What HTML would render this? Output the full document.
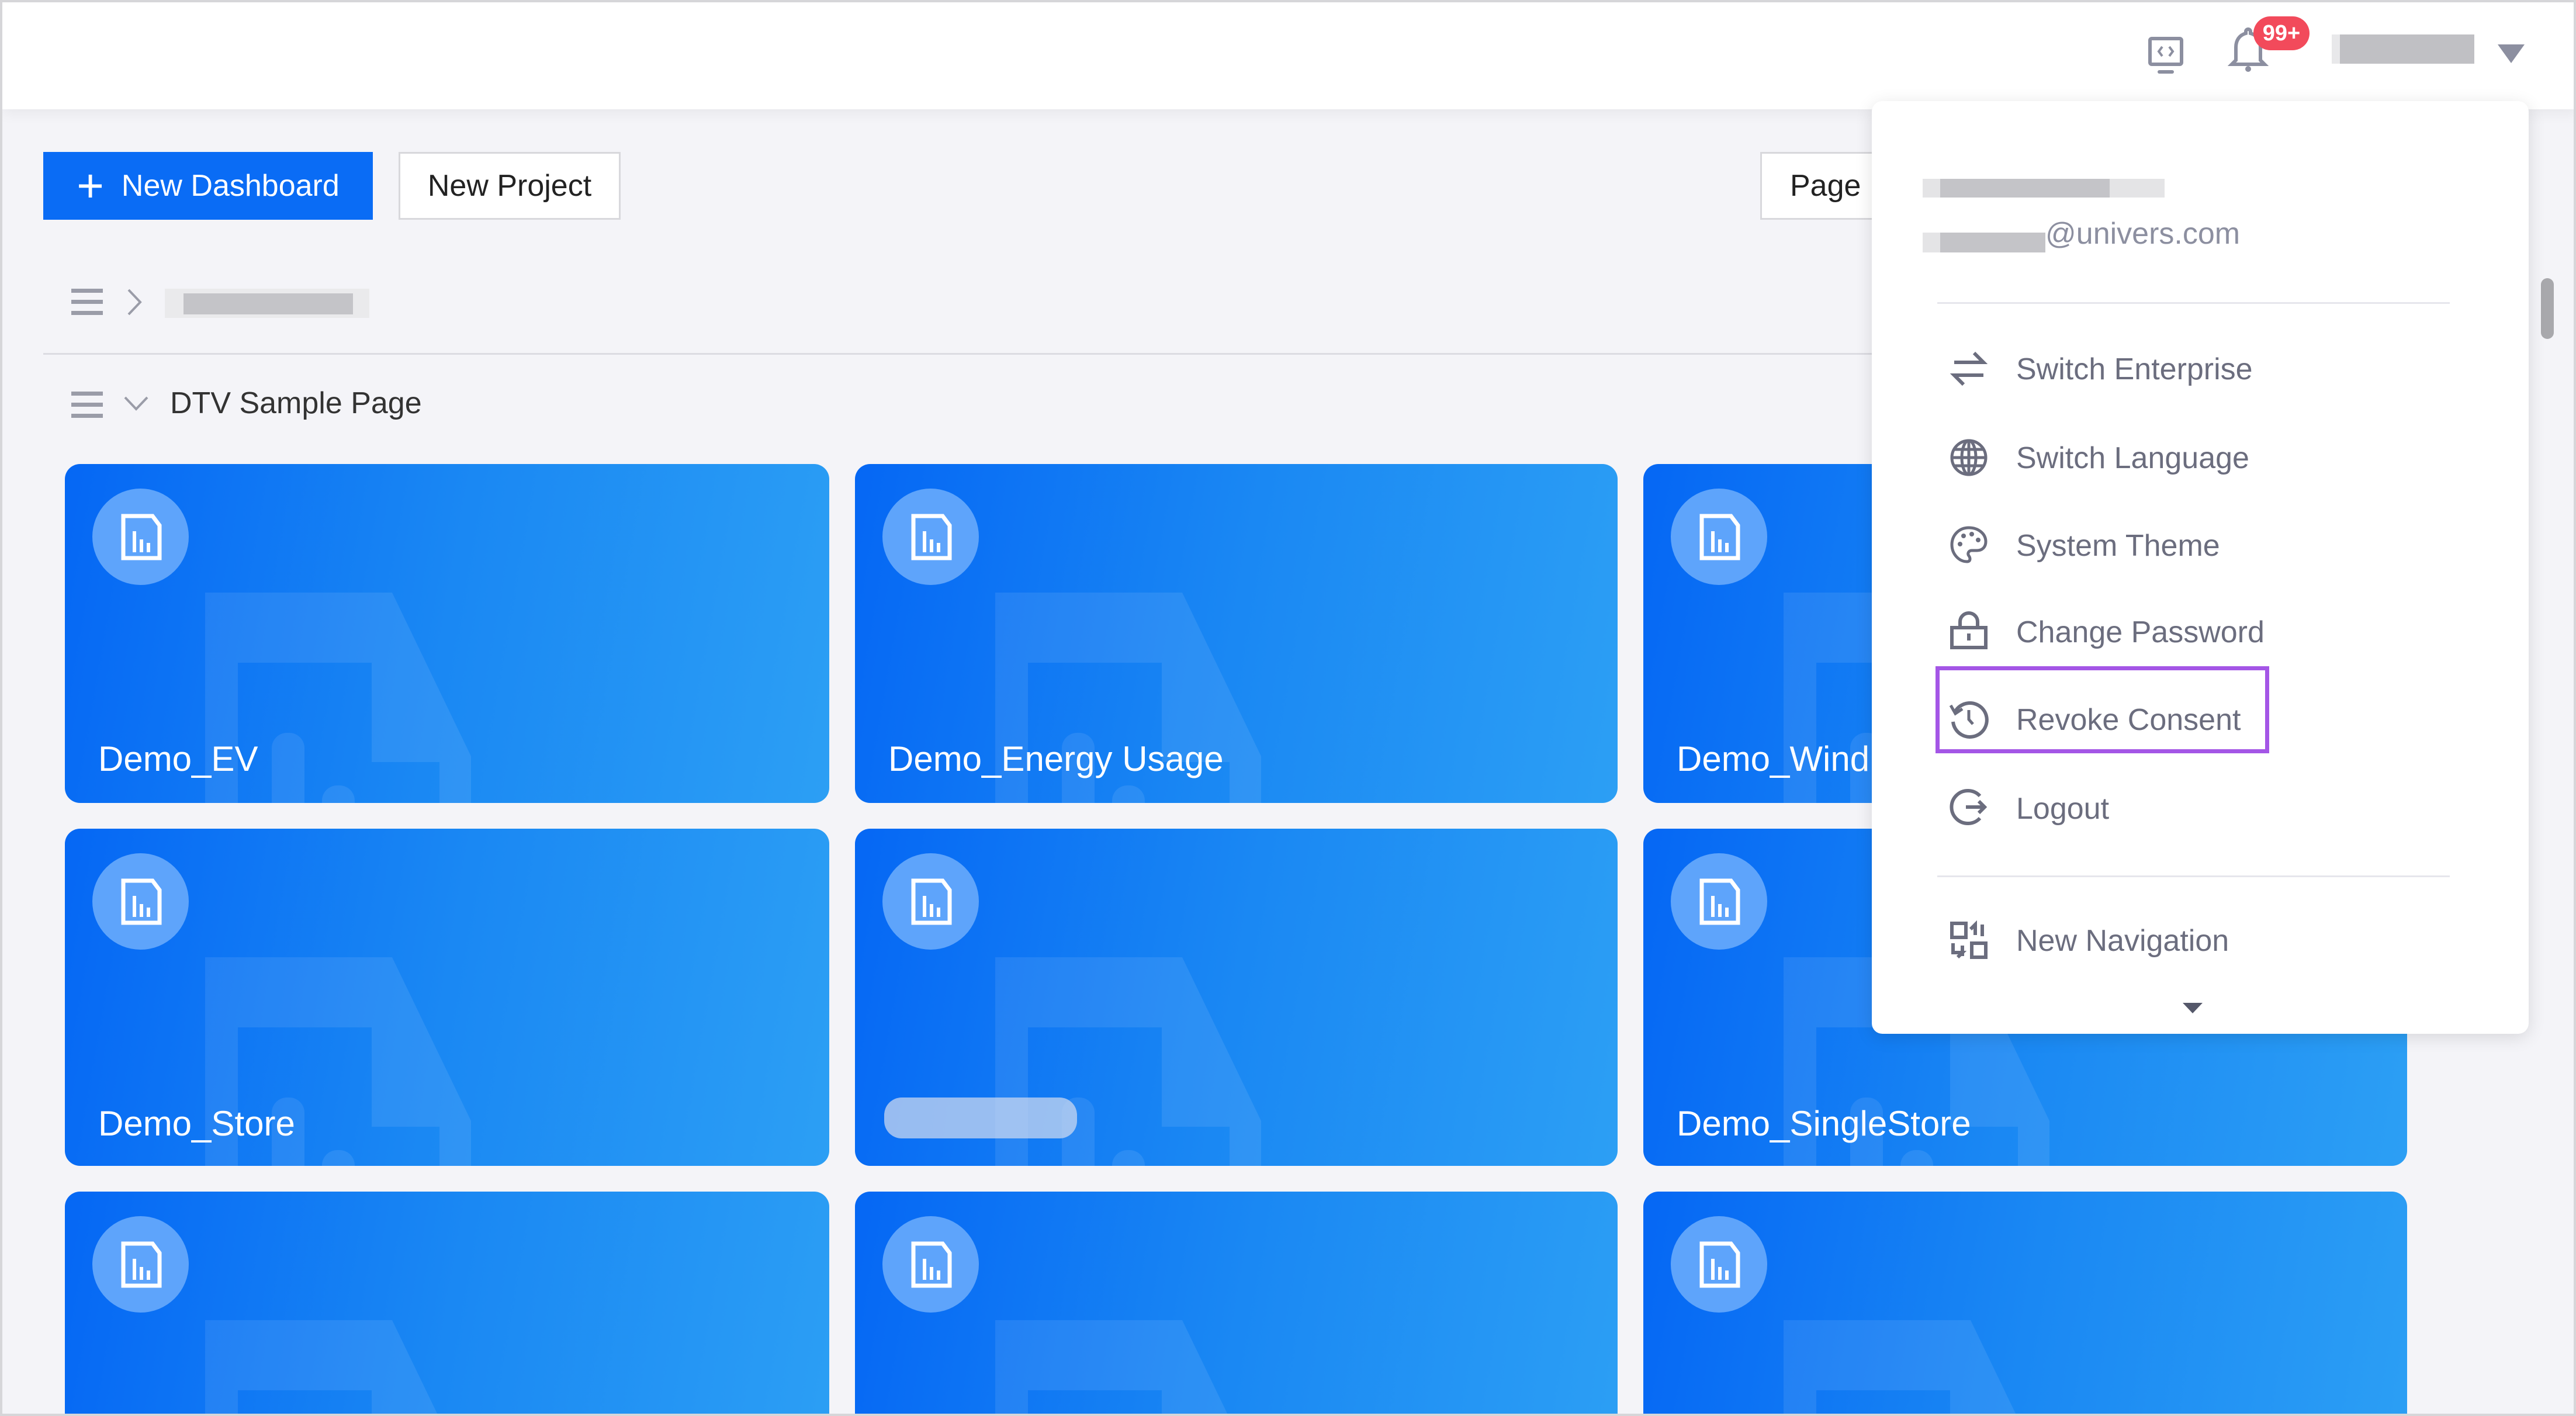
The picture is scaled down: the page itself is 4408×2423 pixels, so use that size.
<!DOCTYPE html>
<html><head><meta charset="utf-8"><style>
*{box-sizing:border-box;margin:0;padding:0}
html,body{width:4408px;height:2423px;overflow:hidden}
body{background:#f4f4f8;font-family:"Liberation Sans",sans-serif}
#root{position:relative;width:4408px;height:2423px;overflow:hidden;border:4px solid #d6d6d9;background:#f4f4f8}
.abs{position:absolute}
.hdr{left:0;top:0;width:4408px;height:183px;background:#fff;box-shadow:0 6px 24px rgba(0,0,0,.06)}
.btn{height:116px;display:flex;align-items:center;justify-content:center;font-size:52px}
.card{border-radius:26px;background:linear-gradient(100deg,#0567f4 0%,#1a88f3 50%,#2c9ff4 100%);overflow:hidden}
.card .circ{position:absolute;left:47px;top:42px;width:165px;height:165px;border-radius:50%;background:#5ea4fb}
.card .t{position:absolute;left:57px;top:470px;color:#fff;font-size:60px}
.card .bg{position:absolute;left:240px;top:220px}
.blur{background:#c4c4c8}
.mi{position:absolute;left:3446px;font-size:52px;color:#6b6d7e}
.ic{position:absolute;left:3330px;width:70px;height:70px}
</style></head><body><div id="root">
<div class="abs hdr"></div>
<svg class="abs" style="left:3670px;top:58px" width="64" height="72" viewBox="0 0 64 72"><rect x="5" y="4" width="54" height="44" rx="3" fill="none" stroke="#8c8fa0" stroke-width="6"/><path d="M26 18l-6 8 6 8M38 18l6 8-6 8" fill="none" stroke="#8c8fa0" stroke-width="4"/><rect x="18" y="58" width="28" height="6" rx="3" fill="#8c8fa0"/></svg>
<svg class="abs" style="left:3808px;top:40px" width="70" height="80" viewBox="0 0 70 80"><path d="M35 6a4 4 0 0 1 4 4v3c11 3 17 12 17 24v22l7 7H7l7-7V37c0-12 6-21 17-24v-3a4 4 0 0 1 4-4z" fill="none" stroke="#8c8fa0" stroke-width="6"/><circle cx="35" cy="74" r="5" fill="#8c8fa0"/></svg>
<div class="abs" style="left:3852px;top:24px;width:96px;height:58px;border-radius:29px;background:#f24a5b;color:#fff;font-size:38px;font-weight:bold;display:flex;align-items:center;justify-content:center">99+</div>
<div class="abs blur" style="left:4000px;top:55px;width:230px;height:50px;background:#c0c0c4;box-shadow:-14px 0 0 #e8e8ea"></div>
<svg class="abs" style="left:4270px;top:72px" width="46" height="34"><path d="M0 0h46L23 32z" fill="#8c8fa0"/></svg>
<div class="abs btn" style="left:70px;top:256px;width:564px;background:#0a6cf5;color:#fff"><span style="font-size:80px;margin-right:30px;font-weight:300;line-height:1">+</span>New Dashboard</div>
<div class="abs btn" style="left:678px;top:256px;width:380px;background:#fff;border:3px solid #d8d8dc;color:#222">New Project</div>
<div class="abs btn" style="left:3008px;top:256px;width:300px;background:#fff;border:3px solid #d8d8dc;color:#222;justify-content:flex-start;padding-left:48px">Page</div>
<div class="abs" style="left:4290px;top:256px;width:30px;height:116px;background:#fff;border:3px solid #d8d8dc;border-left:none"></div>
<svg class="abs" style="left:118px;top:490px" width="54" height="46"><rect y="0" width="54" height="7" fill="#9a9ca8"/><rect y="19" width="54" height="7" fill="#9a9ca8"/><rect y="38" width="54" height="7" fill="#9a9ca8"/></svg>
<svg class="abs" style="left:212px;top:488px" width="30" height="50"><path d="M4 4l20 21L4 46" fill="none" stroke="#9a9ca8" stroke-width="4"/></svg>
<div class="abs" style="left:278px;top:490px;width:350px;height:50px;background:#eaeaec"></div>
<div class="abs blur" style="left:310px;top:498px;width:290px;height:36px"></div>
<div class="abs" style="left:70px;top:600px;width:4250px;height:3px;background:#dcdce2"></div>
<svg class="abs" style="left:118px;top:666px" width="54" height="46"><rect y="0" width="54" height="7" fill="#9a9ca8"/><rect y="19" width="54" height="7" fill="#9a9ca8"/><rect y="38" width="54" height="7" fill="#9a9ca8"/></svg>
<svg class="abs" style="left:206px;top:672px" width="46" height="30"><path d="M4 4l19 20L42 4" fill="none" stroke="#9a9ca8" stroke-width="4"/></svg>
<div class="abs" style="left:287px;top:656px;font-size:52px;color:#333">DTV Sample Page</div>

<!-- cards -->
<div class="abs card" style="left:107px;top:790px;width:1308px;height:580px"><svg class="bg" width="460" height="440" viewBox="0 0 460 440"><path fill-rule="evenodd" d="M0 0h320l135 280v160H0zM56 120v320h345V290H285V120z" fill="rgba(255,255,255,.09)"/><rect x="114" y="240" width="56" height="200" rx="26" fill="rgba(255,255,255,.09)"/><rect x="200" y="330" width="56" height="110" rx="26" fill="rgba(255,255,255,.09)"/><rect x="286" y="390" width="56" height="50" rx="26" fill="rgba(255,255,255,.09)"/></svg><div class="circ"></div><svg class="abs" style="left:96px;top:85px" width="70" height="80" viewBox="0 0 70 80"><path d="M4 4h50l12 16v56H4z" fill="none" stroke="#fff" stroke-width="7"/><rect x="20" y="30" width="6" height="36" fill="#fff"/><rect x="32" y="44" width="6" height="22" fill="#fff"/><rect x="44" y="50" width="6" height="16" fill="#fff"/></svg><div class="t">Demo_EV</div></div>
<div class="abs card" style="left:1459px;top:790px;width:1305px;height:580px"><svg class="bg" width="460" height="440" viewBox="0 0 460 440"><path fill-rule="evenodd" d="M0 0h320l135 280v160H0zM56 120v320h345V290H285V120z" fill="rgba(255,255,255,.09)"/><rect x="114" y="240" width="56" height="200" rx="26" fill="rgba(255,255,255,.09)"/><rect x="200" y="330" width="56" height="110" rx="26" fill="rgba(255,255,255,.09)"/><rect x="286" y="390" width="56" height="50" rx="26" fill="rgba(255,255,255,.09)"/></svg><div class="circ"></div><svg class="abs" style="left:96px;top:85px" width="70" height="80" viewBox="0 0 70 80"><path d="M4 4h50l12 16v56H4z" fill="none" stroke="#fff" stroke-width="7"/><rect x="20" y="30" width="6" height="36" fill="#fff"/><rect x="32" y="44" width="6" height="22" fill="#fff"/><rect x="44" y="50" width="6" height="16" fill="#fff"/></svg><div class="t">Demo_Energy Usage</div></div>
<div class="abs card" style="left:2808px;top:790px;width:1307px;height:580px"><svg class="bg" width="460" height="440" viewBox="0 0 460 440"><path fill-rule="evenodd" d="M0 0h320l135 280v160H0zM56 120v320h345V290H285V120z" fill="rgba(255,255,255,.09)"/><rect x="114" y="240" width="56" height="200" rx="26" fill="rgba(255,255,255,.09)"/><rect x="200" y="330" width="56" height="110" rx="26" fill="rgba(255,255,255,.09)"/><rect x="286" y="390" width="56" height="50" rx="26" fill="rgba(255,255,255,.09)"/></svg><div class="circ"></div><svg class="abs" style="left:96px;top:85px" width="70" height="80" viewBox="0 0 70 80"><path d="M4 4h50l12 16v56H4z" fill="none" stroke="#fff" stroke-width="7"/><rect x="20" y="30" width="6" height="36" fill="#fff"/><rect x="32" y="44" width="6" height="22" fill="#fff"/><rect x="44" y="50" width="6" height="16" fill="#fff"/></svg><div class="t">Demo_Wind</div></div>

<div class="abs card" style="left:107px;top:1414px;width:1308px;height:577px"><svg class="bg" width="460" height="440" viewBox="0 0 460 440"><path fill-rule="evenodd" d="M0 0h320l135 280v160H0zM56 120v320h345V290H285V120z" fill="rgba(255,255,255,.09)"/><rect x="114" y="240" width="56" height="200" rx="26" fill="rgba(255,255,255,.09)"/><rect x="200" y="330" width="56" height="110" rx="26" fill="rgba(255,255,255,.09)"/><rect x="286" y="390" width="56" height="50" rx="26" fill="rgba(255,255,255,.09)"/></svg><div class="circ"></div><svg class="abs" style="left:96px;top:85px" width="70" height="80" viewBox="0 0 70 80"><path d="M4 4h50l12 16v56H4z" fill="none" stroke="#fff" stroke-width="7"/><rect x="20" y="30" width="6" height="36" fill="#fff"/><rect x="32" y="44" width="6" height="22" fill="#fff"/><rect x="44" y="50" width="6" height="16" fill="#fff"/></svg><div class="t">Demo_Store</div></div>
<div class="abs card" style="left:1459px;top:1414px;width:1305px;height:577px"><svg class="bg" width="460" height="440" viewBox="0 0 460 440"><path fill-rule="evenodd" d="M0 0h320l135 280v160H0zM56 120v320h345V290H285V120z" fill="rgba(255,255,255,.09)"/><rect x="114" y="240" width="56" height="200" rx="26" fill="rgba(255,255,255,.09)"/><rect x="200" y="330" width="56" height="110" rx="26" fill="rgba(255,255,255,.09)"/><rect x="286" y="390" width="56" height="50" rx="26" fill="rgba(255,255,255,.09)"/></svg><div class="circ"></div><svg class="abs" style="left:96px;top:85px" width="70" height="80" viewBox="0 0 70 80"><path d="M4 4h50l12 16v56H4z" fill="none" stroke="#fff" stroke-width="7"/><rect x="20" y="30" width="6" height="36" fill="#fff"/><rect x="32" y="44" width="6" height="22" fill="#fff"/><rect x="44" y="50" width="6" height="16" fill="#fff"/></svg><div class="abs" style="left:50px;top:460px;width:330px;height:70px;border-radius:30px;background:rgba(200,215,240,.75)"></div></div>
<div class="abs card" style="left:2808px;top:1414px;width:1307px;height:577px"><svg class="bg" width="460" height="440" viewBox="0 0 460 440"><path fill-rule="evenodd" d="M0 0h320l135 280v160H0zM56 120v320h345V290H285V120z" fill="rgba(255,255,255,.09)"/><rect x="114" y="240" width="56" height="200" rx="26" fill="rgba(255,255,255,.09)"/><rect x="200" y="330" width="56" height="110" rx="26" fill="rgba(255,255,255,.09)"/><rect x="286" y="390" width="56" height="50" rx="26" fill="rgba(255,255,255,.09)"/></svg><div class="circ"></div><svg class="abs" style="left:96px;top:85px" width="70" height="80" viewBox="0 0 70 80"><path d="M4 4h50l12 16v56H4z" fill="none" stroke="#fff" stroke-width="7"/><rect x="20" y="30" width="6" height="36" fill="#fff"/><rect x="32" y="44" width="6" height="22" fill="#fff"/><rect x="44" y="50" width="6" height="16" fill="#fff"/></svg><div class="t">Demo_SingleStore</div></div>

<div class="abs card" style="left:107px;top:2035px;width:1308px;height:500px"><svg class="bg" width="460" height="440" viewBox="0 0 460 440"><path fill-rule="evenodd" d="M0 0h320l135 280v160H0zM56 120v320h345V290H285V120z" fill="rgba(255,255,255,.09)"/></svg><div class="circ"></div><svg class="abs" style="left:96px;top:85px" width="70" height="80" viewBox="0 0 70 80"><path d="M4 4h50l12 16v56H4z" fill="none" stroke="#fff" stroke-width="7"/><rect x="20" y="30" width="6" height="36" fill="#fff"/><rect x="32" y="44" width="6" height="22" fill="#fff"/><rect x="44" y="50" width="6" height="16" fill="#fff"/></svg></div>
<div class="abs card" style="left:1459px;top:2035px;width:1305px;height:500px"><svg class="bg" width="460" height="440" viewBox="0 0 460 440"><path fill-rule="evenodd" d="M0 0h320l135 280v160H0zM56 120v320h345V290H285V120z" fill="rgba(255,255,255,.09)"/></svg><div class="circ"></div><svg class="abs" style="left:96px;top:85px" width="70" height="80" viewBox="0 0 70 80"><path d="M4 4h50l12 16v56H4z" fill="none" stroke="#fff" stroke-width="7"/><rect x="20" y="30" width="6" height="36" fill="#fff"/><rect x="32" y="44" width="6" height="22" fill="#fff"/><rect x="44" y="50" width="6" height="16" fill="#fff"/></svg></div>
<div class="abs card" style="left:2808px;top:2035px;width:1307px;height:500px"><svg class="bg" width="460" height="440" viewBox="0 0 460 440"><path fill-rule="evenodd" d="M0 0h320l135 280v160H0zM56 120v320h345V290H285V120z" fill="rgba(255,255,255,.09)"/></svg><div class="circ"></div><svg class="abs" style="left:96px;top:85px" width="70" height="80" viewBox="0 0 70 80"><path d="M4 4h50l12 16v56H4z" fill="none" stroke="#fff" stroke-width="7"/><rect x="20" y="30" width="6" height="36" fill="#fff"/><rect x="32" y="44" width="6" height="22" fill="#fff"/><rect x="44" y="50" width="6" height="16" fill="#fff"/></svg></div>

<div class="abs" style="left:4344px;top:472px;width:22px;height:104px;border-radius:11px;background:#a8a8ac"></div>

<svg class="abs" style="left:4222px;top:142px" width="60" height="30"><path d="M0 30L30 0l30 30z" fill="#fff"/></svg>
<div class="abs" style="left:3199px;top:169px;width:1124px;height:1596px;background:#fff;border-radius:18px;box-shadow:0 6px 30px rgba(0,0,0,.12)"></div>
<div class="abs" style="left:3286px;top:302px;width:414px;height:32px;background:#e4e4e6"></div>
<div class="abs blur" style="left:3316px;top:302px;width:290px;height:32px"></div>
<div class="abs" style="left:3286px;top:394px;width:210px;height:34px;background:#e4e4e6"></div>
<div class="abs blur" style="left:3316px;top:394px;width:180px;height:34px"></div>
<div class="abs" style="left:3496px;top:366px;font-size:52px;color:#8c8fa0">@univers.com</div>
<div class="abs" style="left:3311px;top:513px;width:877px;height:3px;background:#e6e6ec"></div>
<div class="abs" style="left:3311px;top:1494px;width:877px;height:3px;background:#e6e6ec"></div>

<svg class="ic" style="top:592px" viewBox="0 0 70 70"><path d="M10 24h50L44 8M60 46H10l16 16" fill="none" stroke="#6b6d7e" stroke-width="6"/></svg>
<div class="mi" style="top:598px">Switch Enterprise</div>
<svg class="ic" style="top:744px" viewBox="0 0 70 70"><g fill="none" stroke="#6b6d7e" stroke-width="5"><circle cx="35" cy="35" r="29"/><ellipse cx="35" cy="35" rx="12" ry="29"/><path d="M6 35h58M11 21h48M11 49h48M35 6v58"/></g></svg>
<div class="mi" style="top:750px">Switch Language</div>
<svg class="ic" style="top:893px" viewBox="0 0 70 70"><path d="M35 6C18 6 6 19 6 35s12 29 26 29c6 0 6-6 3-10-3-4 0-9 5-9h9c9 0 15-6 15-15C64 16 51 6 35 6z" fill="none" stroke="#6b6d7e" stroke-width="5"/><circle cx="20" cy="34" r="4" fill="#6b6d7e"/><circle cx="26" cy="20" r="4" fill="#6b6d7e"/><circle cx="40" cy="17" r="4" fill="#6b6d7e"/><circle cx="51" cy="27" r="4" fill="#6b6d7e"/></svg>
<div class="mi" style="top:900px">System Theme</div>
<svg class="ic" style="top:1040px" viewBox="0 0 70 70"><path d="M20 30V20a15 15 0 0 1 30 0v10" fill="none" stroke="#6b6d7e" stroke-width="6"/><rect x="6" y="30" width="58" height="34" fill="none" stroke="#6b6d7e" stroke-width="6"/><rect x="32" y="40" width="6" height="12" fill="#6b6d7e"/></svg>
<div class="mi" style="top:1048px">Change Password</div>
<div class="abs" style="left:3308px;top:1136px;width:571px;height:149px;border:7px solid #a456e6"></div>
<svg class="ic" style="top:1191px" viewBox="0 0 70 70"><path d="M12 22A29 29 0 1 1 8 40" fill="none" stroke="#6b6d7e" stroke-width="6"/><path d="M4 12l8 14 12-8" fill="none" stroke="#6b6d7e" stroke-width="5"/><path d="M35 20v16l7 8" fill="none" stroke="#6b6d7e" stroke-width="5"/></svg>
<div class="mi" style="top:1198px">Revoke Consent</div>
<svg class="ic" style="top:1342px" viewBox="0 0 70 70"><path d="M54 16A28 28 0 1 0 54 54" fill="none" stroke="#6b6d7e" stroke-width="6"/><path d="M30 35h32M52 25l10 10-10 10" fill="none" stroke="#6b6d7e" stroke-width="6"/></svg>
<div class="mi" style="top:1350px">Logout</div>
<svg class="ic" style="top:1570px" viewBox="0 0 70 70"><g fill="none" stroke="#6b6d7e" stroke-width="6"><rect x="6" y="6" width="24" height="24"/><rect x="40" y="40" width="24" height="24"/><path d="M46 26V8l-8 8M58 8v20"/><path d="M24 44v18M8 40v16h16l-8 8"/></g></svg>
<div class="mi" style="top:1576px">New Navigation</div>
<svg class="abs" style="left:3731px;top:1712px" width="34" height="20"><path d="M0 0h34L17 18z" fill="#55586a"/></svg>
</div></body></html>
